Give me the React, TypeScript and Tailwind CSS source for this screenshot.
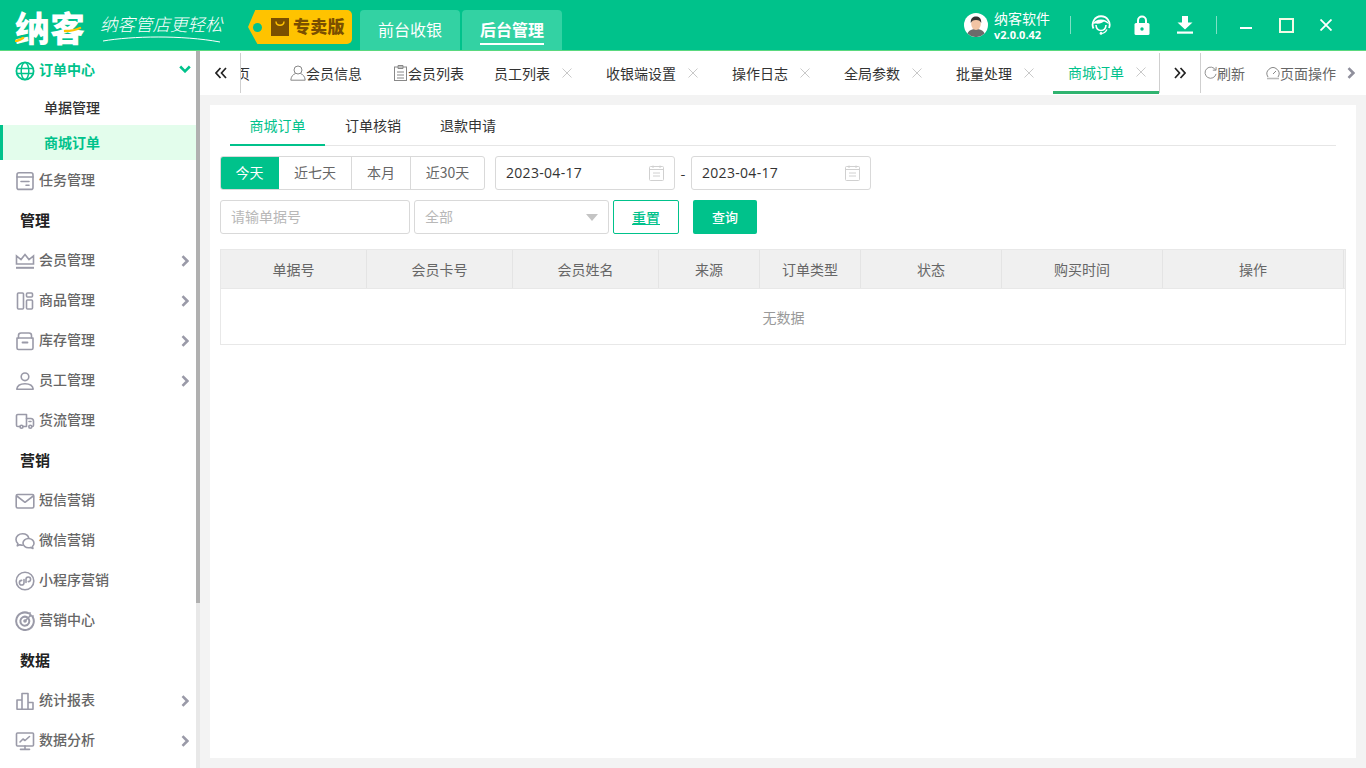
import React from "react";

type IP = { className?: string };
const S = ({ children, className, box = 20 }: { children: React.ReactNode; className?: string; box?: number }) => (
  <svg viewBox={`0 0 ${box} ${box}`} fill="none" stroke="currentColor" strokeWidth={1.6} strokeLinecap="round" strokeLinejoin="round" className={className}>
    {children}
  </svg>
);

const GlobeI = ({ className }: IP) => (
  <S className={className}><circle cx="10" cy="10" r="8.6" strokeWidth={1.8} /><ellipse cx="10" cy="10" rx="3.8" ry="8.6" strokeWidth={1.5} /><path d="M1.6 7.5h16.8M1.6 12.5h16.8" /></S>
);
const TaskI = ({ className }: IP) => (
  <S className={className}><rect x="2" y="1.800" width="16" height="16.600" rx="2" /><path d="M2 6h16M6 10.500h8M11 14.200h3" /></S>
);
const CrownI = ({ className }: IP) => (
  <S className={className}><path d="M1.500 13V5l4.500 3.600L10 3.500l4 5.100L18.500 5v8z" strokeLinejoin="miter" /><path d="M1 16.800h18" strokeWidth={2} strokeLinecap="butt" /></S>
);
const GoodsI = ({ className }: IP) => (
  <S className={className}><rect x="2.500" y="2" width="6" height="16" rx="1" /><rect x="11.500" y="2" width="6" height="4" rx="1" /><rect x="11.500" y="9" width="6" height="9" rx="1" /></S>
);
const BoxI = ({ className }: IP) => (
  <S className={className}><path d="M3.500 7V4.500a2.500 2.500 0 0 1 2.500-2.500h8a2.500 2.500 0 0 1 2.500 2.500V7" /><path d="M2 7h16v10a1.500 1.500 0 0 1-1.500 1.500h-13A1.500 1.500 0 0 1 2 17z" /><path d="M7.500 11.500h5" strokeWidth={1.8} /></S>
);
const UserI = ({ className }: IP) => (
  <S className={className}><circle cx="10" cy="5.800" r="3.800" /><path d="M1.800 18.200c.4-3.800 3.300-5.400 8.200-5.400s7.800 1.600 8.200 5.400z" /></S>
);
const TruckI = ({ className }: IP) => (
  <S className={className}><path d="M5 15.500H2.800a1.300 1.300 0 0 1-1.300-1.300V4.800a1.300 1.300 0 0 1 1.300-1.300h8.700v12H8" /><path d="M11.500 7.500h4.300a2.700 2.700 0 0 1 2.700 2.700v4a1.300 1.300 0 0 1-1.300 1.300H17M14 10.500h2" /><circle cx="6.500" cy="15.800" r="1.500" /><circle cx="15.300" cy="15.800" r="1.500" /></S>
);
const MailI = ({ className }: IP) => (
  <S className={className}><rect x="1.200" y="3.500" width="17.600" height="13.500" rx="1.500" /><path d="M1.800 5l8.200 6.300L18.200 5" /></S>
);
const WechatI = ({ className }: IP) => (
  <S className={className}><path d="M7.500 14.200c-1 0-1.900-.2-2.700-.5l-2.500 1.100.6-2.200C1.700 11.500 1 10 1 8.500 1 5.300 3.900 2.800 7.500 2.800c3.100 0 5.700 1.800 6.300 4.400" /><path d="M13.500 7.500c3 0 5.500 2.100 5.500 4.700 0 1.300-.6 2.400-1.600 3.300l.5 1.900-2.200-1c-.7.200-1.400.4-2.200.4-3 0-5.500-2.100-5.500-4.700s2.500-4.600 5.500-4.600z" /></S>
);
const MiniI = ({ className }: IP) => (
  <S className={className}><circle cx="10" cy="10" r="8.800" /><path d="M9 8.500v3.200a2.300 2.300 0 1 1-2.300-2.300M11 11.500V8.300a2.300 2.300 0 1 1 2.300 2.300" /></S>
);
const TargetI = ({ className }: IP) => (
  <S className={className}><path d="M13.800 2.300A8.800 8.800 0 1 0 17.700 6" strokeWidth={2} /><path d="M12 6.200a4.500 4.500 0 1 0 1.800 1.800" strokeWidth={2} /><circle cx="10" cy="10" r="1" /><path d="M10 10l6-6M15 1.800V5h3.200" /></S>
);
const StatsI = ({ className }: IP) => (
  <S className={className}><path d="M2 18V9h5v9M7 18V2.500h6V18M13 18v-6.500h5V18M2 18.300h16" /></S>
);
const ChartI = ({ className }: IP) => (
  <S className={className}><rect x="1.500" y="2" width="17" height="13" rx="1" /><path d="M5 11l3-3 2 1.500 4.500-4M10 15v3M5.500 18.400h9" /></S>
);

const Chevron = ({ className }: IP) => (
  <svg viewBox="0 0 8 12" fill="none" stroke="currentColor" strokeWidth={2.600} className={className}><path d="M1.500 1.200L6.300 6l-4.800 4.800" /></svg>
);
const DoubleL = ({ flip }: { flip?: boolean }) => (
  <svg viewBox="0 0 12 12" fill="none" stroke="#222" strokeWidth={1.700} className={`w-[12px] h-[12px] ${flip ? "rotate-180" : ""}`}><path d="M5.500 1L1 6l4.500 5M11 1L6.500 6l4.500 5" /></svg>
);
const CloseX = () => (
  <svg viewBox="0 0 10 10" stroke="#c9c9c9" strokeWidth={1} className="w-[10px] h-[10px] ml-[12px] shrink-0"><path d="M0.500 0.500l9 9M9.500 0.500l-9 9" /></svg>
);
const CalI = () => (
  <svg viewBox="0 0 15 16" fill="none" stroke="#d0d0d0" strokeWidth={1} className="w-[15px] h-[16px]"><rect x="0.500" y="1.500" width="14" height="14" rx="1" /><path d="M0.500 4.500h14M4 0.500v2.500M11 0.500v2.500M4 8h7M4 11h7" /></svg>
);

const Row = ({ icon, label, arrow }: { icon: React.ReactNode; label: string; arrow?: boolean }) => (
  <div className="h-10 flex items-center pl-[15px] pr-[7px] text-[#666] font-medium">
    <span className="w-[20px] h-[20px] mt-[2px] text-[#9a9aa8] shrink-0">{icon}</span>
    <span className="ml-[4px] pb-[2px] flex-1 whitespace-nowrap">{label}</span>
    {arrow && <Chevron className="w-[8px] h-[12px] mt-[2px] text-[#9a9aa8]" />}
  </div>
);
const Heading = ({ label }: { label: string }) => (
  <div className="h-10 flex items-center pl-[20px] pb-[1px] text-[#222] font-bold text-[15px]">{label}</div>
);

const ic = "w-5 h-5";

function Sidebar() {
  return (
    <aside className="w-[200px] shrink-0 flex bg-white overflow-hidden text-sm">
      <div className="w-[196px] shrink-0">
        <div className="h-[39px] flex items-center pl-[15px] pr-[7px] text-[#00c28b] font-bold">
          <GlobeI className="w-5 h-5 shrink-0" />
          <span className="ml-[4px] pb-[3px] flex-1">订单中心</span>
          <Chevron className="w-[8px] h-[12px] rotate-90 -translate-y-[2px]" />
        </div>
        <div className="h-[35px] flex items-center pl-[44px] pb-[2px] text-[#333] font-medium">单据管理</div>
        <div className="h-[35px] flex items-center pl-[41px] pb-[2px] text-[#00c28b] font-bold bg-[#e3fdec] border-l-[3px] border-[#00c28b]">商城订单</div>
        <Row icon={<TaskI className={ic} />} label="任务管理" />
        <Heading label="管理" />
        <Row icon={<CrownI className={ic} />} label="会员管理" arrow />
        <Row icon={<GoodsI className={ic} />} label="商品管理" arrow />
        <Row icon={<BoxI className={ic} />} label="库存管理" arrow />
        <Row icon={<UserI className={ic} />} label="员工管理" arrow />
        <Row icon={<TruckI className={ic} />} label="货流管理" />
        <Heading label="营销" />
        <Row icon={<MailI className={ic} />} label="短信营销" />
        <Row icon={<WechatI className={ic} />} label="微信营销" />
        <Row icon={<MiniI className={ic} />} label="小程序营销" />
        <Row icon={<TargetI className={ic} />} label="营销中心" />
        <Heading label="数据" />
        <Row icon={<StatsI className={ic} />} label="统计报表" arrow />
        <Row icon={<ChartI className={ic} />} label="数据分析" arrow />
      </div>
      <div className="w-[4px] bg-[#e8e8e8] shrink-0">
        <div className="h-[552px] bg-[#b0b0b0]" />
      </div>
    </aside>
  );
}

function TopTab({ label, active }: { label: string; active?: boolean }) {
  return (
    <div className="w-[100px] h-10 rounded-t-[4px] bg-[#33d2a3] flex justify-center pt-[8px] text-white text-base">
      <span className={active ? "h-[27px] font-bold border-b-2 border-white leading-[23px]" : "leading-[23px]"}>{label}</span>
    </div>
  );
}

function Header() {
  return (
    <header className="h-[51px] shrink-0 bg-[#00c28b] border-b border-[#5ad97f] flex items-start">
      <div className="w-[248px] shrink-0 flex items-start pl-[15px]">
        <div className="relative">
          <span className="block text-[35px] leading-[54px] font-black text-white whitespace-nowrap">纳客</span>
          <svg viewBox="0 0 70 30" className="absolute left-0 top-[12px] w-[70px] h-[30px]" fill="none" stroke="#ffc300" strokeWidth={2.500} strokeLinecap="round">
            <path d="M1 29c3-.5 5-1.500 7-3" />
            <path d="M50 19c6 0 11-1 15-3" />
          </svg>
        </div>
        <div className="ml-[15px] relative">
          <span className="block text-[17.500px] leading-[48px] text-white italic font-light whitespace-nowrap">纳客管店更轻松</span>
          <svg viewBox="0 0 120 8" className="absolute left-[2px] top-[35px] w-[120px] h-[8px]" fill="none" stroke="#fff" strokeWidth={1}><path d="M1 6C30 1 80 0 118 7" /></svg>
        </div>
      </div>
      <div className="mt-[10px] w-[104px] h-[34px] bg-[#ffc300] rounded-r-[5px] flex items-center shrink-0 [clip-path:polygon(7%_0,100%_0,100%_100%,9%_100%,0_50%)]">
        <span className="w-[9px] h-[9px] rounded-full bg-[#00c28b] ml-[5px] shrink-0" />
        <svg viewBox="0 0 18 18" className="w-[18px] h-[18px] ml-[9px] shrink-0"><rect width="18" height="18" fill="#7a4f00" /><path d="M5 3.500c0 5 8 5 8 0" fill="none" stroke="#ffc300" strokeWidth={1.400} /></svg>
        <span className="ml-[4px] pb-[2px] text-[17px] font-black text-[#7a4f00] whitespace-nowrap tracking-[0.2px]">专卖版</span>
      </div>
      <div className="ml-[8px] mt-[10px] flex gap-[2px]">
        <TopTab label="前台收银" />
        <TopTab label="后台管理" active />
      </div>
      <div className="flex-1" />
      <div className="flex items-center h-[50px] text-white shrink-0 pr-[34px]">
        <svg viewBox="0 0 24 24" className="w-6 h-6 shrink-0">
          <circle cx="12" cy="12" r="12" fill="#fff" />
          <path d="M3.500 20.500c1.500-3.500 5-4.500 8.500-4.500s7 1 8.500 4.500A12 12 0 0 1 3.500 20.500z" fill="#6b6b6b" />
          <ellipse cx="12" cy="11" rx="4.800" ry="6" fill="#f2c4a4" />
          <path d="M6.800 10c-.5-5 2.500-6.500 5.200-6.500s5.700 1.500 5.200 6.500c-1-2-2-3-5.200-3s-4.200 1-5.200 3z" fill="#333" />
        </svg>
        <div className="ml-[6px] w-[76px]">
          <div className="text-sm leading-[18px] whitespace-nowrap">纳客软件</div>
          <div className="text-[11px] leading-[15px] font-bold font-['Open_Sans',sans-serif]">v2.0.0.42</div>
        </div>
        <span className="w-px h-[18px] bg-[#7fe0c5]" />
        <svg viewBox="0 0 20 20" className="w-[20px] h-[20px] ml-[20px] shrink-0" fill="none" stroke="#fff">
          <path d="M2.500 13.500A8.500 8.500 0 1 1 18 13" strokeWidth={1.800} />
          <path d="M2 9c1-3 4-4.500 8-4.500s7 1.500 8 4.500c-2.500-1-3.500-2-5-2.500-2 1.500-4 2.500-9 2z" fill="#fff" stroke="none" />
          <path d="M5 10c.3 4 2.500 5.500 5 5.500S14.700 14 15 10" strokeWidth={1.600} />
          <path d="M16 14.500c-1.500 3-3.500 4-6 4" strokeWidth={1.200} />
          <circle cx="10" cy="18.400" r="1.400" fill="#fff" stroke="none" />
        </svg>
        <svg viewBox="0 0 16 20" className="w-[16px] h-[20px] ml-[23px] shrink-0">
          <path d="M4 9V5.500a4 4 0 0 1 8 0V9" fill="none" stroke="#fff" strokeWidth={2} />
          <rect x="0.500" y="8" width="15" height="12" rx="1.500" fill="#fff" />
          <circle cx="8" cy="14" r="1.700" fill="#00c28b" />
        </svg>
        <svg viewBox="0 0 16 18" className="w-[16px] h-[18px] ml-[27px] shrink-0" fill="#fff">
          <path d="M5 0h6v6.500h4.500L8 13.500.5 6.500H5z" />
          <rect x="0" y="15.500" width="16" height="2.200" />
        </svg>
        <span className="w-px h-[18px] bg-[#7fe0c5] ml-[23px]" />
        <span className="w-[12px] h-[2px] bg-white ml-[23px] mt-[6px] shrink-0" />
        <span className="w-[15px] h-[15px] border-2 border-[#f2fbe6] ml-[27px] shrink-0" />
        <svg viewBox="0 0 12 12" stroke="#fff" strokeWidth={1.800} className="w-[12px] h-[12px] ml-[26px] shrink-0"><path d="M.5.500l11 11M11.500.500l-11 11" /></svg>
      </div>
    </header>
  );
}

function PageTab({ label, active, w }: { label: string; active?: boolean; w: string }) {
  return (
    <div className={`h-[43px] pl-[15px] flex items-center shrink-0 overflow-hidden ${w} ${active ? "text-[#00c28b] border-b-[3px] border-[#2fb36f] pt-[1px]" : "text-[#333]"}`}>
      <span className="whitespace-nowrap">{label}</span>
      <CloseX />
    </div>
  );
}

function TabBar() {
  return (
    <div className="h-[44px] bg-white flex items-start shrink-0 overflow-hidden text-sm">
      <div className="w-[41px] h-[40px] mt-[2px] border-r border-[#cfcfcf] flex items-center pl-[15px] shrink-0">
        <DoubleL />
      </div>
      <div className="w-[34px] h-[43px] flex items-center shrink-0 overflow-hidden text-[#333]">
        <span className="-ml-[5px]">页</span>
      </div>
      <div className="h-[43px] flex items-center pl-[15px] w-[102px] shrink-0 text-[#333]">
        <svg viewBox="0 0 16 16" fill="none" stroke="#888" strokeWidth={1} className="w-[16px] h-[16px] shrink-0"><circle cx="8" cy="5" r="4" /><path d="M5.500 8.500C3 9.500 1 11.500.8 15.200h14.400C15 11.500 13 9.500 10.500 8.500" /></svg>
        <span className="whitespace-nowrap">会员信息</span>
      </div>
      <div className="h-[43px] flex items-center pl-[17px] w-[102px] shrink-0 text-[#333]">
        <svg viewBox="0 0 14 16" fill="none" stroke="#888" strokeWidth={1} className="w-[14px] h-[16px] shrink-0"><rect x="0.500" y="2" width="12" height="13.500" /><path d="M4 .5h5v3H4zM3 7h7M3 10h7M3 13h7" /></svg>
        <span className="whitespace-nowrap">会员列表</span>
      </div>
      <PageTab label="员工列表" w="w-[112px]" />
      <PageTab label="收银端设置" w="w-[126px]" />
      <PageTab label="操作日志" w="w-[112px]" />
      <PageTab label="全局参数" w="w-[112px]" />
      <PageTab label="批量处理" w="w-[112px]" />
      <PageTab label="商城订单" active w="w-[106px]" />
      <div className="w-[42px] h-[40px] mt-[2px] border-x border-[#cfcfcf] flex items-center justify-center shrink-0">
        <DoubleL flip />
      </div>
      <div className="h-[43px] flex items-center pl-[3px] text-[#666] shrink-0">
        <svg viewBox="0 0 14 14" fill="none" stroke="#888" strokeWidth={1} className="w-[13px] h-[13px] shrink-0"><path d="M12.500 4.500A6 6 0 1 0 13 8.500" /><path d="M9.500 4.500h3.500V1" /></svg>
        <span className="whitespace-nowrap">刷新</span>
        <svg viewBox="0 0 14 14" fill="none" stroke="#888" strokeWidth={1} className="w-[14px] h-[14px] ml-[21px] shrink-0"><path d="M2 11A6 6 0 1 1 12 11" /><path d="M7 8l3-3" /><path d="M1 12.500h12" strokeWidth={1.600} stroke="#bbb" /></svg>
        <span className="whitespace-nowrap">页面操作</span>
        <Chevron className="w-[8px] h-[12px] ml-[11px] text-[#8f8f9c]" />
      </div>
    </div>
  );
}

const columns: [string, string][] = [
  ["单据号", "w-[146px]"],
  ["会员卡号", "w-[146px]"],
  ["会员姓名", "w-[146px]"],
  ["来源", "w-[101px]"],
  ["订单类型", "w-[101px]"],
  ["状态", "w-[141px]"],
  ["购买时间", "w-[161px]"],
  ["操作", "w-[181px]"],
];

function DateBox() {
  return (
    <div className="w-[180px] h-[34px] border border-[#d9d9d9] rounded-[3px] flex items-center justify-between pl-[10px] pr-[10px] text-[#333] text-sm tracking-[0.3px] font-['Open_Sans',sans-serif]">
      <span>2023-04-17</span>
      <CalI />
    </div>
  );
}

function Content() {
  return (
    <main className="flex-1 min-h-0 bg-white mx-[10px] mt-[10px] mb-[10px]">
      <div className="mx-[20px] h-[41px] border-b border-[#e6e6e6] flex text-sm text-[#333]">
        <div className="w-[95px] h-[41px] border-b-[2px] border-[#00c28b] text-[#00c28b] flex justify-center pt-[10px] leading-[20px]">商城订单</div>
        <div className="ml-[20px] pt-[10px] leading-[20px]">订单核销</div>
        <div className="ml-[39px] pt-[10px] leading-[20px]">退款申请</div>
      </div>
      <div className="px-[10px] mt-[10px] flex items-center text-sm">
        <div className="flex h-[34px] border border-[#d9d9d9] rounded-[3px] overflow-hidden text-[#666]">
          <div className="w-[59px] -ml-px -my-px h-[34px] pb-[2px] bg-[#00c28b] text-white flex items-center justify-center">今天</div>
          <div className="w-[73px] pb-[2px] flex items-center justify-center border-r border-[#d9d9d9]">近七天</div>
          <div className="w-[59px] pb-[2px] flex items-center justify-center border-r border-[#d9d9d9]">本月</div>
          <div className="w-[73px] pb-[2px] flex items-center justify-center">近30天</div>
        </div>
        <div className="ml-[10px]"><DateBox /></div>
        <span className="w-[16px] text-center text-[#333]">-</span>
        <DateBox />
      </div>
      <div className="px-[10px] mt-[10px] flex items-center text-sm">
        <div className="w-[190px] h-[34px] pb-[2px] border border-[#d9d9d9] rounded-[3px] flex items-center px-[10px] text-[#b8b8b8]">请输单据号</div>
        <div className="ml-[4px] w-[195px] h-[34px] border border-[#d9d9d9] rounded-[3px] flex items-center justify-between pl-[10px] pr-[10px] text-[#b8b8b8]">
          <span className="pb-[2px]">全部</span>
          <span className="w-0 h-0 border-x-[6px] border-x-transparent border-t-[7px] border-t-[#c4c4c4]" />
        </div>
        <div className="ml-[4px] w-[66px] h-[34px] border border-[#00c28b] rounded-[2px] flex items-center justify-center text-[#00c28b] underline font-medium">重置</div>
        <div className="ml-[14px] w-[64px] h-[34px] bg-[#00c28b] rounded-[2px] flex items-center justify-center text-white font-medium text-[13px]">查询</div>
      </div>
      <div className="mx-[10px] mt-[15px] border border-[#e8e8e8] h-[96px] text-sm">
        <div className="h-[39px] bg-[#f0f0f0] border-b border-[#e8e8e8] flex text-[#666]">
          {columns.map(([t, w]) => (
            <div key={t} className={`${w} shrink-0 flex items-center justify-center border-r border-[#e4e4e4]`}>{t}</div>
          ))}
        </div>
        <div className="h-[55px] pt-[1px] pl-[1px] flex items-center justify-center text-[#999]">无数据</div>
      </div>
    </main>
  );
}

export default function App() {
  return (
    <div className="w-[1366px] h-[768px] overflow-hidden flex flex-col bg-[#f3f3f3] font-['Noto_Sans_CJK_SC','Noto_Sans',sans-serif]">
      <Header />
      <div className="flex-1 min-h-0 flex">
        <Sidebar />
        <div className="flex-1 min-w-0 flex flex-col">
          <TabBar />
          <Content />
        </div>
      </div>
    </div>
  );
}
